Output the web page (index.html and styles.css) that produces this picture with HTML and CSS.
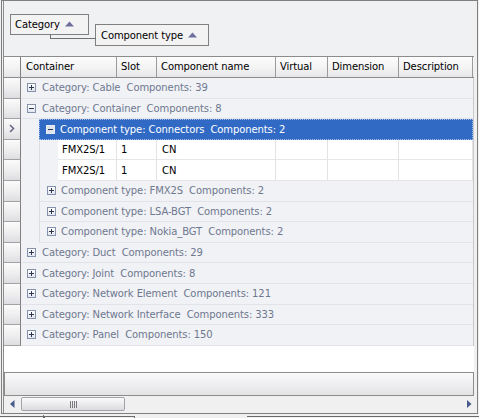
FILE: index.html
```html
<!DOCTYPE html>
<html>
<head>
<meta charset="utf-8">
<link rel="stylesheet" href="styles.css">
</head>
<body>
<div class="frame">
  <div class="inner">
    <div class="groupby">
      <div class="gbox gbox-cat"><span>Category</span><svg class="tri" width="9" height="6" viewBox="0 0 9 6"><polygon points="0,5.5 4.5,0.5 9,5.5" fill="#6e6f9c"/></svg></div>
      <div class="gbox gbox-type"><span>Component type</span><svg class="tri" width="9" height="6" viewBox="0 0 9 6"><polygon points="0,5.5 4.5,0.5 9,5.5" fill="#6e6f9c"/></svg></div>
    </div>
    <div class="grid">
      <div class="hdr">
        <div class="hc hc-ind"></div>
        <div class="hc hc-first">Container</div>
        <div class="hc">Slot</div>
        <div class="hc">Component name</div>
        <div class="hc">Virtual</div>
        <div class="hc">Dimension</div>
        <div class="hc">Description</div>
      </div>
      <div class="rows">
        <div class="row"><div class="ind"></div><div class="g1"><span class="ex plus"></span><span class="gt">Category: Cable  Components: 39</span></div></div>
        <div class="row"><div class="ind"></div><div class="g1"><span class="ex"></span><span class="gt">Category: Container  Components: 8</span></div></div>
        <div class="row"><div class="ind"><svg width="6" height="9" viewBox="0 0 6 9"><polyline points="1,1 4.5,4.5 1,8" fill="none" stroke="#6a6a8c" stroke-width="1.6"/></svg></div><div class="indent"></div><div class="g2 sel"><span class="ex exsel"></span><span class="gt">Component type: Connectors  Components: 2</span></div></div>
        <div class="row"><div class="ind"></div><div class="indent"></div><div class="dspace"></div><div class="cells"><div class="c c1">FMX2S/1</div><div class="c c2">1</div><div class="c c3">CN</div><div class="c c4"></div><div class="c c5"></div><div class="c c6"></div></div></div>
        <div class="row"><div class="ind"></div><div class="indent"></div><div class="dspace"></div><div class="cells"><div class="c c1">FMX2S/1</div><div class="c c2">1</div><div class="c c3">CN</div><div class="c c4"></div><div class="c c5"></div><div class="c c6"></div></div></div>
        <div class="row"><div class="ind"></div><div class="indent"></div><div class="g2"><span class="ex plus"></span><span class="gt">Component type: FMX2S  Components: 2</span></div></div>
        <div class="row"><div class="ind"></div><div class="indent"></div><div class="g2"><span class="ex plus"></span><span class="gt">Component type: LSA-BGT  Components: 2</span></div></div>
        <div class="row"><div class="ind"></div><div class="indent"></div><div class="g2"><span class="ex plus"></span><span class="gt">Component type: Nokia_BGT  Components: 2</span></div></div>
        <div class="row"><div class="ind"></div><div class="g1"><span class="ex plus"></span><span class="gt">Category: Duct  Components: 29</span></div></div>
        <div class="row"><div class="ind"></div><div class="g1"><span class="ex plus"></span><span class="gt">Category: Joint  Components: 8</span></div></div>
        <div class="row"><div class="ind"></div><div class="g1"><span class="ex plus"></span><span class="gt">Category: Network Element  Components: 121</span></div></div>
        <div class="row"><div class="ind"></div><div class="g1"><span class="ex plus"></span><span class="gt">Category: Network Interface  Components: 333</span></div></div>
        <div class="row"><div class="ind"></div><div class="g1"><span class="ex plus"></span><span class="gt">Category: Panel  Components: 150</span></div></div>
      </div>
      <div class="blank"></div>
      <div class="footer"></div>
    </div>
    <div class="hscroll">
      <svg class="arrow" width="5" height="8" viewBox="0 0 5 8"><polygon points="4.5,0 0,4 4.5,8" fill="#4a5a8c"/></svg>
      <div class="thumb"><span class="grip"></span></div>
      <div class="track"></div>
      <svg class="arrow" width="5" height="8" viewBox="0 0 5 8"><polygon points="0,0 4.5,4 0,8" fill="#4a5a8c"/></svg>
    </div>
  </div>
</div>
<div class="strip">
  <div class="s1"></div><div class="s2"></div><div class="s3"></div><div class="s4"></div>
</div>
</body>
</html>
```
FILE: styles.css
```css
html, body {
  margin: 0;
  padding: 0;
}
body {
  width: 479px;
  height: 418px;
  overflow: hidden;
  background: #f0f0f0;
  font-family: "DejaVu Sans", sans-serif;
  font-size: 10px;
  letter-spacing: -0.1px;
  color: #000;
}
.frame {
  margin-left: 1px;
  width: 475px;
  height: 412px;
  border: 1px solid #7f7f7f;
  background: #f0f0f1;
}
.inner {
  margin-left: 1px;
  border-left: 1px solid #8e8e8e;
  height: 412px;
  width: 470px;
  display: flex;
  flex-direction: column;
}
.groupby {
  height: 55px;
  background: #f0f1f3;
  display: flex;
  flex-direction: column;
  align-items: flex-start;
  flex: none;
}
.gbox {
  box-sizing: border-box;
  border: 1px solid #808080;
  background: #f3f3f4;
  display: flex;
  align-items: center;
  padding-left: 4px;
}
.gbox .tri {
  margin-left: 5px;
  margin-top: -1px;
}
.gbox-cat {
  position: relative;
  margin-top: 13px;
  margin-left: 6px;
  width: 79px;
  height: 21px;
}
.gbox-cat::after {
  content: "";
  position: absolute;
  left: 39px;
  top: 100%;
  width: 45px;
  height: 4px;
  border-left: 1px solid #707070;
  border-bottom: 1px solid #707070;
}
.gbox-type {
  margin-top: -11px;
  margin-left: 91px;
  width: 114px;
  height: 22px;
  padding-left: 5px;
}
.grid {
  width: 470px;
  display: flex;
  flex-direction: column;
  flex: none;
}
.hdr {
  display: grid;
  grid-template-columns: 17px 96px 40px 119px 52px 71px 74px;
  height: 22px;
  box-sizing: border-box;
  border-top: 1px solid #8c8c8c;
  border-bottom: 1px solid #8c8c8c;
  background: linear-gradient(#fcfcfc, #f3f3f4 55%, #e6e6e8);
}
.hc {
  box-sizing: border-box;
  border-right: 1px solid #9a9a9a;
  padding-left: 4px;
  line-height: 20px;
  white-space: nowrap;
  overflow: hidden;
}
.hc-ind {
  border-right: 1px solid #808080;
}
.hc-first {
  padding-left: 5px;
}
.rows {
  display: flex;
  flex-direction: column;
  border-right: 1px solid #c9c9cc;
  width: 469px;
}
.row {
  display: flex;
  height: 20.6px;
  flex: none;
}
.ind {
  width: 17px;
  box-sizing: border-box;
  border-right: 1px solid #808080;
  border-bottom: 1px solid #a2a2a2;
  background: linear-gradient(#fbfbfb, #ececee 60%, #dedee2);
  display: flex;
  align-items: center;
  justify-content: center;
  flex: none;
}
.g1, .g2 {
  flex: 1;
  display: flex;
  align-items: center;
  box-sizing: border-box;
  background: #f1f2f5;
  border-bottom: 1px solid #e2e3e8;
  color: #6e7890;
  white-space: pre;
}
.g1 {
  padding-left: 6px;
}
.indent {
  width: 18px;
  flex: none;
  box-sizing: border-box;
  background: #f1f2f5;
  border-bottom: 1px solid #f1f2f5;
}
.g2 {
  border-left: 1px solid #dcdde2;
  padding-left: 7px;
}
.g2.sel {
  background: #316ac5;
  color: #fff;
  border: 1px dotted #a8c0ec;
  padding-left: 6px;
}
.ex {
  position: relative;
  width: 9px;
  height: 9px;
  box-sizing: border-box;
  border: 1px solid #8592ae;
  background: linear-gradient(#ffffff, #e2e5ee);
  flex: none;
  margin-right: 5px;
}
.ex::before {
  content: "";
  position: absolute;
  left: 1px;
  top: 3px;
  width: 5px;
  height: 1px;
  background: #2f3650;
}
.ex.plus::after {
  content: "";
  position: absolute;
  left: 3px;
  top: 1px;
  width: 1px;
  height: 5px;
  background: #2f3650;
}
.ex.exsel {
  border-color: #e8ecf6;
  background: #dfe3ee;
}
.g1 .ex {
  margin-right: 6px;
}
.dspace {
  width: 19px;
  flex: none;
  box-sizing: border-box;
  background: #f1f2f5;
  border-left: 1px solid #dcdde2;
}
.cells {
  flex: 1;
  display: flex;
  background: #fff;
}
.c {
  box-sizing: border-box;
  border-right: 1px solid #e3e3e6;
  border-bottom: 1px solid #e6e6e9;
  padding-left: 4px;
  display: flex;
  align-items: center;
  flex: none;
}
.c1 { width: 59px; }
.c2 { width: 40px; }
.c3 { width: 119px; padding-left: 5px; }
.c4 { width: 52px; }
.c5 { width: 71px; }
.c6 { width: 74px; }
.blank {
  height: 26.2px;
  background: #fff;
  flex: none;
}
.footer {
  height: 24px;
  box-sizing: border-box;
  border: 1px solid #8c8c8c;
  background: linear-gradient(#fafafa, #f0f0f2 45%, #e3e3e6);
  flex: none;
}
.hscroll {
  height: 17px;
  display: flex;
  align-items: center;
  background: #f0f0f1;
  flex: none;
  padding-left: 6px;
  padding-right: 2px;
}
.thumb {
  margin-left: 6px;
  width: 104px;
  height: 14px;
  box-sizing: border-box;
  border: 1px solid #a3a3a8;
  border-radius: 2px;
  background: linear-gradient(#fbfbfb, #ebebed 50%, #dcdce0);
  display: flex;
  align-items: center;
  justify-content: center;
  flex: none;
}
.grip {
  width: 7px;
  height: 7px;
  background: repeating-linear-gradient(90deg, #7a7a80 0 1px, transparent 1px 2px);
}
.track {
  flex: 1;
}
.strip {
  position: relative;
  height: 4px;
}
.s1 {
  position: absolute;
  left: 0;
  top: 2px;
  width: 43px;
  border-top: 1px solid #6a6a6a;
}
.s2 {
  position: absolute;
  left: 43px;
  top: 1px;
  height: 3px;
  border-left: 1px solid #6a6a6a;
}
.s3 {
  position: absolute;
  left: 44px;
  top: 2px;
  width: 89px;
  height: 3px;
  border: 1px solid #6a6a6a;
  border-bottom: none;
}
.s4 {
  position: absolute;
  left: 247px;
  top: 2px;
  right: 0;
  border-top: 1px solid #6a6a6a;
}
```
